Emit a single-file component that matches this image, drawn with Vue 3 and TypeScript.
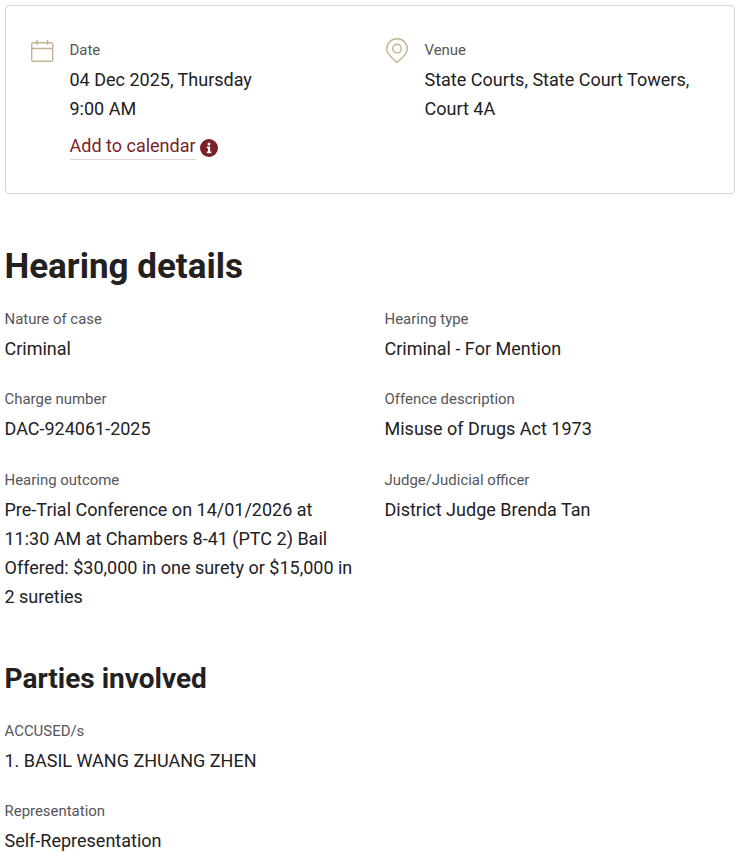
<script setup lang="ts">
interface Field {
  label: string;
  value: string;
}

const hearingFields: Field[] = [
  { label: 'Nature of case', value: 'Criminal' },
  { label: 'Hearing type', value: 'Criminal - For Mention' },
  { label: 'Charge number', value: 'DAC-924061-2025' },
  { label: 'Offence description', value: 'Misuse of Drugs Act 1973' },
  {
    label: 'Hearing outcome',
    value:
      'Pre-Trial Conference on 14/01/2026 at 11:30 AM at Chambers 8-41 (PTC 2) Bail Offered: $30,000 in one surety or $15,000 in 2 sureties',
  },
  { label: 'Judge/Judicial officer', value: 'District Judge Brenda Tan' },
];

const partyFields: Field[] = [
  { label: 'ACCUSED/s', value: '1. BASIL WANG ZHUANG ZHEN' },
  { label: 'Representation', value: 'Self-Representation' },
];
</script>

<template>
  <div class="page">
    <section class="summary">
      <div class="summary-item">
        <svg class="summary-icon" width="24" height="24" viewBox="0 0 24 24" fill="none" stroke="#c4b393" stroke-width="1.4">
          <rect x="1.7" y="3.7" width="21" height="18.6" rx="1.6" />
          <path d="M1.7 9.5h21M7 1v5M17.5 1v5" />
        </svg>
        <div class="summary-body">
          <div class="label">Date</div>
          <div class="value">04 Dec 2025, Thursday</div>
          <div class="value">9:00 AM</div>
          <div class="calendar-row">
            <a class="calendar-link">Add to calendar</a>
            <svg class="info-icon" width="18" height="18" viewBox="0 0 18 18">
              <circle cx="9" cy="9" r="9" fill="#7a1f28" />
              <circle cx="9" cy="5" r="1.5" fill="#fff" />
              <path d="M6.8 7.6h3.3v5h1.2v1.6H6.8v-1.6H8v-3.4H6.8z" fill="#fff" />
            </svg>
          </div>
        </div>
      </div>
      <div class="summary-item">
        <svg class="summary-icon venue-icon" width="24" height="26" viewBox="0 0 24 26" fill="none" stroke="#c4b393" stroke-width="1.4">
          <path d="M12 24.6C8 20.5 1.7 16.6 1.7 11a10.3 10.3 0 0 1 20.6 0c0 5.6-6.3 9.5-10.3 13.6z" />
          <circle cx="12" cy="10.6" r="4.3" />
        </svg>
        <div class="summary-body">
          <div class="label">Venue</div>
          <div class="value">State Courts, State Court Towers, Court 4A</div>
        </div>
      </div>
    </section>

    <h1>Hearing details</h1>
    <div class="field-grid">
      <div v-for="field in hearingFields" :key="field.label" class="field">
        <div class="label">{{ field.label }}</div>
        <div class="value">{{ field.value }}</div>
      </div>
    </div>

    <h2>Parties involved</h2>
    <div class="party-list">
      <div v-for="field in partyFields" :key="field.label" class="field">
        <div class="label">{{ field.label }}</div>
        <div class="value">{{ field.value }}</div>
      </div>
    </div>
  </div>
</template>

<style>
html,
body {
  background: #fff;
  overflow: hidden;
}
</style>

<style scoped>
.page {
  box-sizing: border-box;
  width: 739px;
  height: 860px;
  padding: 5px 4px 0 4.5px;
  overflow: hidden;
  font-family: Roboto, "Liberation Sans", sans-serif;
  color: #22211f;
}

.summary {
  display: grid;
  grid-template-columns: 355px 1fr;
  box-sizing: border-box;
  height: 189px;
  margin-left: 0.5px;
  padding: 32px 24px 0 24px;
  border: 1px solid #d6d6d6;
  border-radius: 4px;
}

.summary-item {
  display: flex;
  gap: 15.5px;
}

.summary-icon {
  flex: none;
  margin-top: 1px;
}

.venue-icon {
  margin-top: 0;
}

.summary-body {
  flex: 1;
  min-width: 0;
}

.label {
  margin-bottom: 3px;
  font-size: 14.95px;
  line-height: 24px;
  color: #55555a;
}

.value {
  font-size: 18px;
  line-height: 29px;
  color: #22211f;
}

.calendar-row {
  display: flex;
  align-items: center;
  gap: 4px;
  margin-top: 11px;
}

.calendar-link {
  padding-bottom: 1px;
  border-bottom: 1px solid #e3cfd1;
  font-size: 18px;
  line-height: 24px;
  color: #7a1f28;
}

.info-icon {
  margin-top: 1px;
}

h1 {
  margin: 50px 0 0;
  font-size: 35px;
  line-height: 46px;
  font-weight: 700;
}

.field-grid {
  display: grid;
  grid-template-columns: 380px 1fr;
  row-gap: 24px;
  margin-top: 17px;
}

/* third row sits a pixel lower than the even rhythm */
.field:nth-child(n + 5) {
  margin-top: 1px;
}

.field-grid .value {
  max-width: 350px;
}

h2 {
  margin: 49px 0 0;
  font-size: 28px;
  line-height: 38px;
  font-weight: 700;
}

.party-list {
  display: grid;
  row-gap: 24px;
  margin-top: 21px;
}
</style>
